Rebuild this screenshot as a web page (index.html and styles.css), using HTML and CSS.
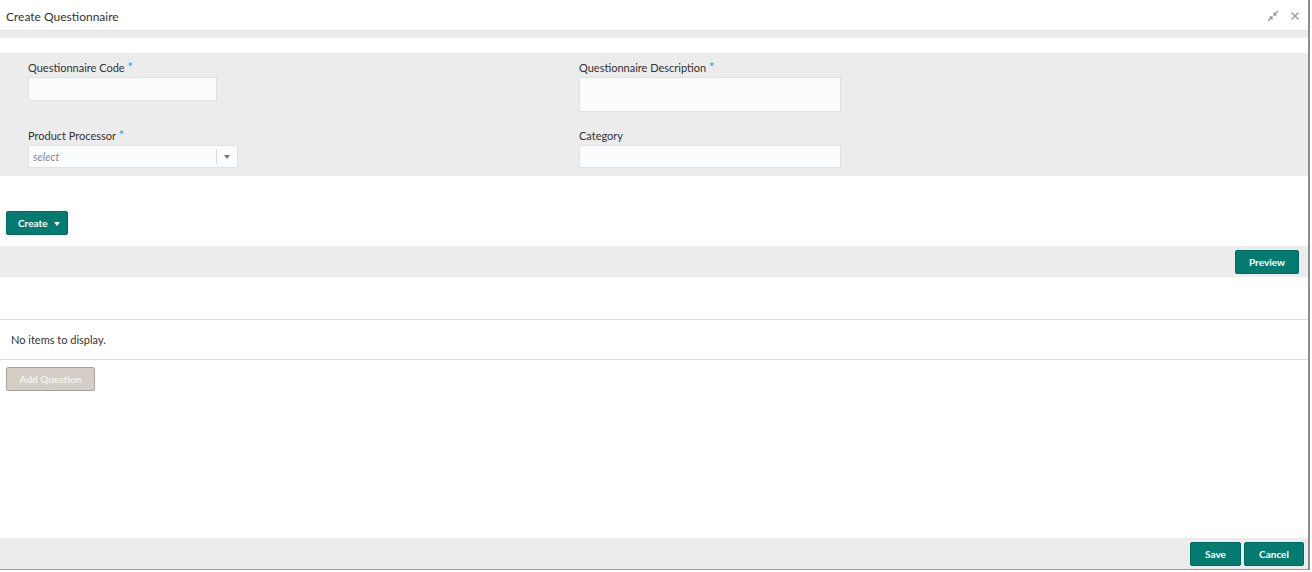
FILE: index.html
```html
<!DOCTYPE html>
<html lang="en">
<head>
    <meta charset="UTF-8">
    <title>Create Questionnaire</title>
    <link rel="stylesheet" href="styles.css">
</head>
<body>
    <div class="dialog">
        <div class="dialog-header">
            <span class="dialog-title">Create Questionnaire</span>
            <div class="header-icons">
                <!-- minimise icon -->
                <svg class="icon" width="12" height="12" viewBox="0 0 12 12">
                    <path d="M11 1 L7.5 4.5 M7 2.5 L7 5 L9.5 5" stroke="#9a9a9a" stroke-width="1.3" fill="none"/>
                    <path d="M1 11 L4.5 7.5 M5 9.5 L5 7 L2.5 7" stroke="#9a9a9a" stroke-width="1.3" fill="none"/>
                </svg>
                <svg class="icon" width="10" height="10" viewBox="0 0 10 10">
                    <path d="M1.5 1.5 L8.5 8.5 M8.5 1.5 L1.5 8.5" stroke="#9a9a9a" stroke-width="1.4"/>
                </svg>
            </div>
        </div>
        <div class="band"></div>
        <div class="spacer"></div>

        <div class="form-panel">
            <div class="field">
                <label>Questionnaire Code <span class="req">*</span></label>
                <input type="text" class="input w-code">
            </div>
            <div class="field">
                <label>Questionnaire Description <span class="req">*</span></label>
                <textarea class="input w-desc tall"></textarea>
            </div>
            <div class="field">
                <label>Product Processor <span class="req">*</span></label>
                <div class="select-box">
                    <span class="placeholder">select</span>
                    <span class="select-arrow"><i class="tri grey"></i></span>
                </div>
            </div>
            <div class="field">
                <label>Category</label>
                <input type="text" class="input w-desc">
            </div>
        </div>

        <div class="create-row">
            <button class="btn teal">Create <i class="tri white"></i></button>
        </div>

        <div class="toolbar">
            <button class="btn teal btn-preview">Preview</button>
        </div>

        <div class="grid-head"></div>
        <div class="grid-empty">No items to display.</div>

        <div class="add-row">
            <button class="btn disabled">Add Question</button>
        </div>

        <div class="fill"></div>

        <div class="dialog-footer">
            <button class="btn teal btn-save">Save</button>
            <button class="btn teal btn-cancel">Cancel</button>
        </div>
    </div>
</body>
</html>
```

FILE: styles.css
```css
body {
    margin: 0;
    font-family: Lato, 'Open Sans', sans-serif;
    font-size: 11px;
    color: #2b2b2b;
    background: #fff;
}
.dialog {
    width: 1308px;
    height: 569px;
    display: flex;
    flex-direction: column;
    border-right: 2px solid #8c8c8c;
    border-bottom: 1px solid #9a9a9a;
    background: #fff;
}
.dialog-header {
    height: 31px;
    flex: none;
    display: flex;
    align-items: center;
    justify-content: space-between;
    padding: 2px 8px 0 6px;
    border-bottom: 1px solid #e2e2e2;
    box-sizing: border-box;
}
.dialog-title {
    font-size: 12px;
    color: #333;
}
.header-icons {
    display: flex;
    align-items: center;
    gap: 11px;
}
.icon {
    display: block;
}
.band {
    height: 7px;
    flex: none;
    background: #ececec;
}
.spacer {
    height: 15px;
    flex: none;
}
.form-panel {
    flex: none;
    background: #ececec;
    display: grid;
    grid-template-columns: 551px 1fr;
    row-gap: 16px;
    padding: 7px 0 8px 28px;
}
.field label {
    display: block;
    height: 16px;
    line-height: 16px;
    margin-bottom: 1px;
    color: #333;
}
.req {
    color: #2aa5c9;
    font-size: 13px;
    line-height: 1;
}
.input {
    display: block;
    box-sizing: border-box;
    height: 24px;
    margin: 0;
    border: 1px solid #e1e1e1;
    background: #fafbfc;
    font-family: inherit;
    resize: none;
    outline: none;
}
.w-code {
    width: 189px;
}
.w-desc {
    width: 262px;
    height: 23px;
}
.input.tall {
    height: 35px;
}
.select-box {
    box-sizing: border-box;
    width: 210px;
    height: 23px;
    margin-top: 1px;
    border: 1px solid #e1e1e1;
    background: #fafbfc;
    display: flex;
    align-items: center;
}
.field:nth-child(4) .input {
    margin-top: 1px;
}
.placeholder {
    flex: 1;
    padding-left: 4px;
    font-style: italic;
    color: #8a8a8a;
}
.select-arrow {
    width: 20px;
    height: 15px;
    border-left: 1px solid #dcdcdc;
    display: flex;
    align-items: center;
    justify-content: center;
}
.tri {
    display: inline-block;
    width: 0;
    height: 0;
    border-left: 3px solid transparent;
    border-right: 3px solid transparent;
    border-top: 4px solid #777;
}
.tri.white {
    border-top-color: #fff;
    margin-left: 4px;
    vertical-align: 1px;
}
.create-row {
    flex: none;
    height: 70px;
    box-sizing: border-box;
    padding: 35px 0 0 6px;
}
.btn {
    height: 24px;
    border-radius: 2px;
    border: 1px solid transparent;
    font-family: inherit;
    font-size: 10px;
    font-weight: 700;
    padding: 0;
    cursor: pointer;
}
.btn.teal {
    background: #047b70;
    border-color: #006a60;
    color: #fff;
}
.create-row .btn {
    width: 62px;
    padding-left: 4px;
}
.toolbar {
    flex: none;
    height: 31px;
    background: #ececec;
    display: flex;
    align-items: center;
    justify-content: flex-end;
    padding-right: 9px;
}
.btn-preview {
    width: 64px;
}
.grid-head {
    flex: none;
    height: 42px;
    border-bottom: 1px solid #dedede;
}
.grid-empty {
    flex: none;
    height: 39px;
    line-height: 39px;
    padding-left: 11px;
    border-bottom: 1px solid #dedede;
    color: #333;
}
.add-row {
    flex: none;
    padding: 7px 0 0 6px;
}
.btn.disabled {
    width: 89px;
    background: #d5cec6;
    border-color: #a8a39e;
    color: #f4f1ee;
    cursor: default;
}
.fill {
    flex: 1;
}
.dialog-footer {
    flex: none;
    height: 31px;
    background: #ececec;
    display: flex;
    align-items: center;
    justify-content: flex-end;
    gap: 3px;
    padding-right: 4px;
}
.btn-save {
    width: 51px;
}
.btn-cancel {
    width: 60px;
}
```
